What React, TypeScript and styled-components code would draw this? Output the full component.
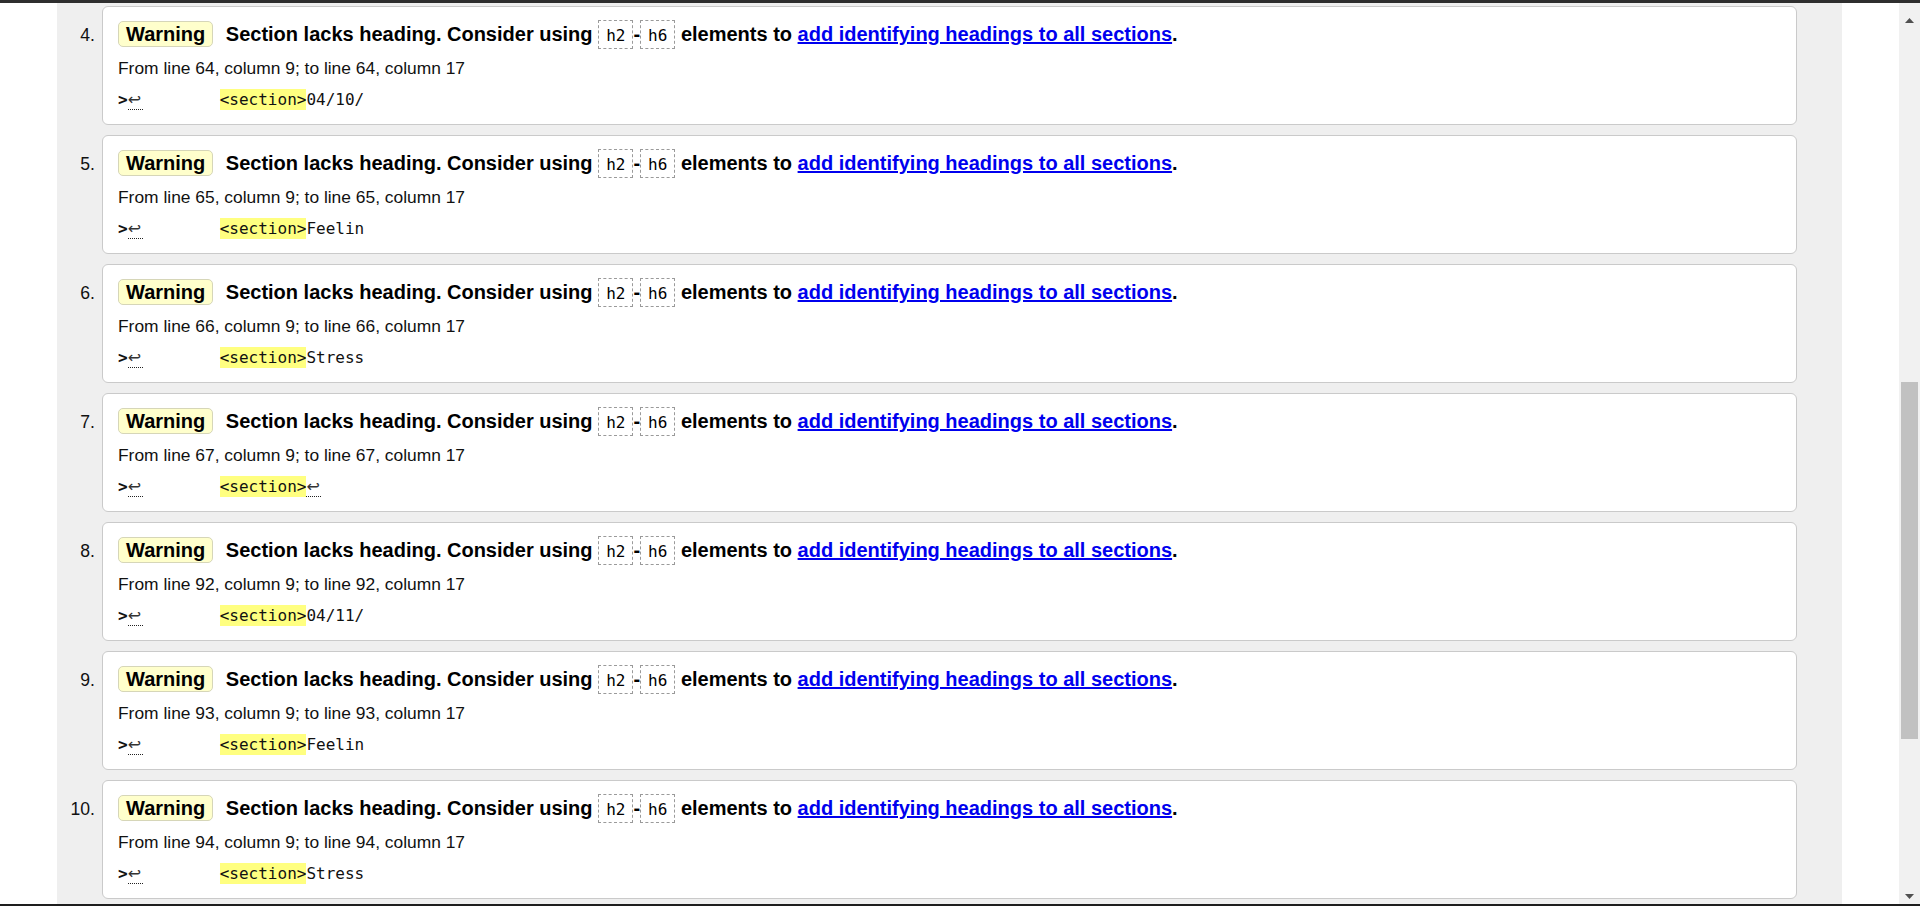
import React from "react";
import styled, { createGlobalStyle } from "styled-components";

const GlobalStyle = createGlobalStyle`
  html, body {
    margin: 0;
    padding: 0;
    overflow: hidden;
    background: #fff;
  }
  body {
    font-family: "Liberation Sans", Arial, Helvetica, sans-serif;
    color: #000;
  }
`;

const Frame = styled.div`
  display: flex;
  flex-direction: column;
  width: 1920px;
  height: 906px;
  overflow: hidden;
`;

const TopEdge = styled.div`
  flex: none;
  height: 3px;
  background: #2e2e2e;
`;

const BottomEdge = styled.div`
  flex: none;
  height: 2px;
  background: #1e1e1e;
`;

const Body = styled.div`
  flex: 1;
  min-height: 0;
  display: flex;
`;

const Viewport = styled.main`
  flex: 1;
  min-width: 0;
  background: #fff;
  padding: 0 57px;
  overflow: hidden;
`;

const Results = styled.ol`
  list-style: none;
  margin: 0;
  padding: 3px 45px 0 0;
  height: 100%;
  box-sizing: border-box;
  background: #efefef;
  display: flex;
  flex-direction: column;
  gap: 10px;
`;

const Item = styled.li`
  display: flex;
  align-items: baseline;
`;

const Num = styled.span`
  flex: none;
  width: 45px;
  box-sizing: border-box;
  padding-right: 7px;
  text-align: right;
  font-size: 17.6px;
  color: #111;
`;

const Card = styled.div`
  flex: 1;
  min-width: 0;
  background: #fff;
  border: 1px solid #cacaca;
  border-radius: 6px;
  padding: 13px 15px;
`;

const Message = styled.p`
  margin: 0;
  font-size: 20px;
  line-height: 29px;
  font-weight: bold;
`;

const Badge = styled.strong`
  display: inline-block;
  padding: 0 7px;
  line-height: 24px;
  border: 1px solid #d6d6b8;
  border-radius: 5px;
  background: #ffffcc;
  margin-right: 7px;
`;

const Code = styled.code`
  display: inline-block;
  font-family: "DejaVu Sans Mono", "Liberation Mono", monospace;
  font-weight: normal;
  font-size: 16px;
  line-height: 21px;
  padding: 4px 7px 2px;
  border: 1px dashed #9a9a9a;
`;

const Link = styled.a`
  color: #0000ee;
  text-decoration: underline;
`;

const Location = styled.p`
  margin: 8px 0 0;
  font-size: 17.4px;
  line-height: 22px;
  color: #111;
`;

const Extract = styled.p`
  margin: 10px 0 0;
  font-family: "DejaVu Sans Mono", "Liberation Mono", monospace;
  font-size: 16px;
  line-height: 22px;
  white-space: pre;
  color: #111;
`;

const Gt = styled.b`
  font-weight: bold;
`;

const Lf = styled.span`
  display: inline-block;
  width: 15px;
  line-height: 18px;
  font-family: "DejaVu Sans", sans-serif;
  font-size: 16px;
  color: #333;
  border-bottom: 1px dotted #222;
`;

const Mark = styled.mark`
  background: #ffff80;
  color: #111;
  padding: 1px 0;
`;

const ScrollBar = styled.div`
  flex: none;
  width: 21px;
  background: #f1f1f1;
  display: flex;
  flex-direction: column;
  align-items: center;
`;

const ArrowButton = styled.div<{ $h: number }>`
  flex: none;
  width: 100%;
  height: ${(p) => p.$h}px;
  display: flex;
  align-items: flex-end;
  justify-content: center;
  padding-bottom: 5px;
  box-sizing: border-box;
`;

const Track = styled.div`
  flex: 1;
  width: 100%;
  display: flex;
  flex-direction: column;
  align-items: center;
`;

const Thumb = styled.div<{ $top: number; $size: number }>`
  width: 17px;
  margin-top: ${(p) => p.$top}px;
  height: ${(p) => p.$size}px;
  background: #c1c1c1;
`;

type Entry = { n: number; line: number; after: string; lf?: boolean };

const entries: Entry[] = [
  { n: 4, line: 64, after: "04/10/" },
  { n: 5, line: 65, after: "Feelin" },
  { n: 6, line: 66, after: "Stress" },
  { n: 7, line: 67, after: "", lf: true },
  { n: 8, line: 92, after: "04/11/" },
  { n: 9, line: 93, after: "Feelin" },
  { n: 10, line: 94, after: "Stress" },
];

const Arrow = ({ down }: { down?: boolean }) => (
  <svg width="9" height="5" viewBox="0 0 9 5">
    <polygon
      points={down ? "0,0 9,0 4.5,5" : "4.5,0 9,5 0,5"}
      fill="#505050"
    />
  </svg>
);

export default function App() {
  return (
    <>
      <GlobalStyle />
      <Frame>
        <TopEdge />
        <Body>
          <Viewport>
            <Results>
              {entries.map((e) => (
                <Item key={e.n}>
                  <Num>{e.n}.</Num>
                  <Card>
                    <Message>
                      <Badge>Warning</Badge> Section lacks heading. Consider
                      using <Code>h2</Code>-<Code>h6</Code> elements to{" "}
                      <Link href="#">add identifying headings to all sections</Link>.
                    </Message>
                    <Location>
                      From line {e.line}, column 9; to line {e.line}, column 17
                    </Location>
                    <Extract>
                      <Gt>&gt;</Gt>
                      <Lf title="Line break">↩</Lf>
                      {"        "}
                      <Mark>&lt;section&gt;</Mark>
                      {e.after}
                      {e.lf && <Lf title="Line break">↩</Lf>}
                    </Extract>
                  </Card>
                </Item>
              ))}
            </Results>
          </Viewport>
          <ScrollBar>
            <ArrowButton $h={25}>
              <Arrow />
            </ArrowButton>
            <Track>
              <Thumb $top={354} $size={357} />
            </Track>
            <ArrowButton $h={18}>
              <Arrow down />
            </ArrowButton>
          </ScrollBar>
        </Body>
        <BottomEdge />
      </Frame>
    </>
  );
}
